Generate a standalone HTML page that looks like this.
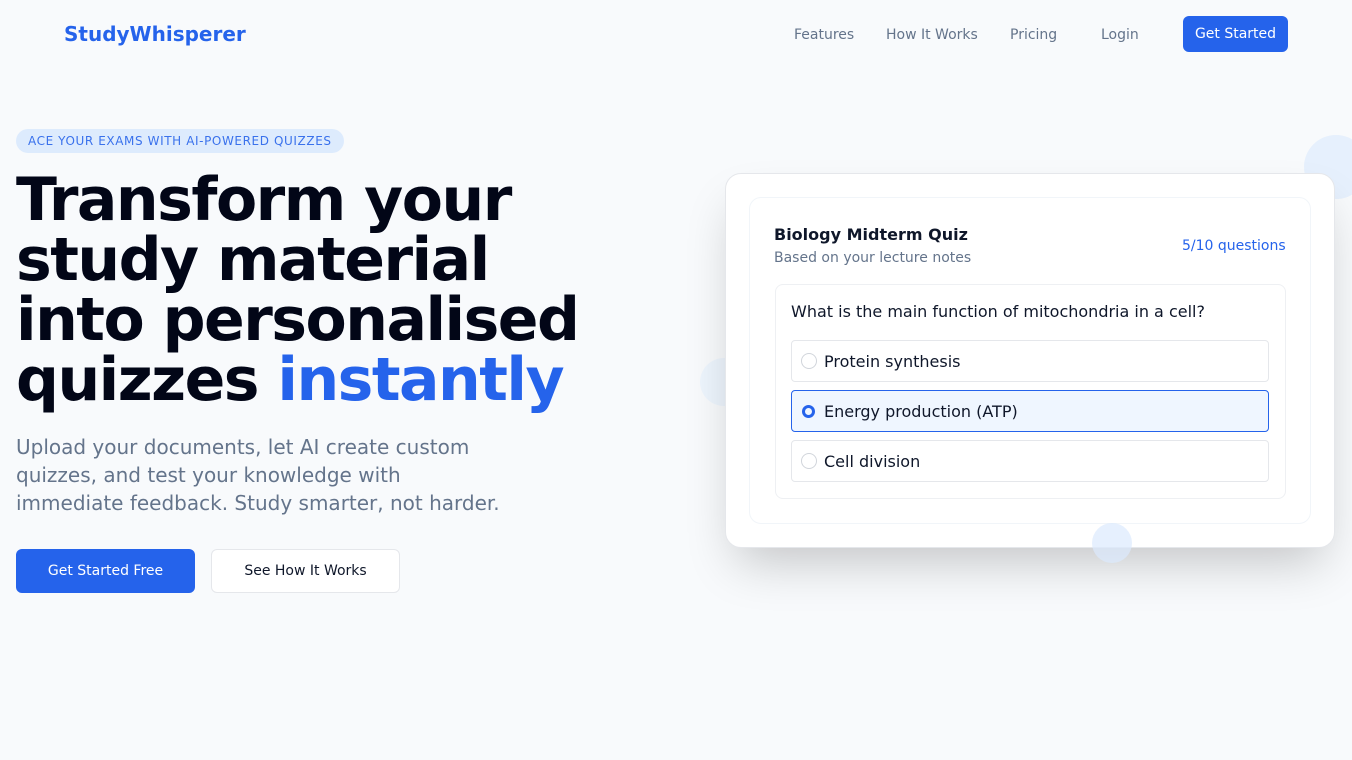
<!DOCTYPE html>
<html><head><meta charset="utf-8"><style>
*{margin:0;padding:0;box-sizing:border-box}
body{width:1352px;height:760px;background:#f8fafc;font-family:"DejaVu Sans","Liberation Sans",sans-serif;position:relative;overflow:hidden;color:#0f172a}
.a{position:absolute}
.logo{left:64px;top:21px;font-size:20px;font-weight:bold;color:#2563eb;line-height:26px}
.nav{top:26px;font-size:14px;color:#64748b;line-height:18px}
.btn{display:flex;align-items:center;justify-content:center;border-radius:6px}
.badge{left:16px;top:129px;height:24px;padding:0 12px;border-radius:12px;background:#dbeafe;color:#2563eb;font-size:12px;letter-spacing:.6px;line-height:24px;opacity:.9}
h1{position:absolute;left:16px;top:170px;font-size:60px;line-height:60px;letter-spacing:-1.5px;font-weight:bold;color:#020617;white-space:nowrap}
.p{left:16px;top:433px;width:490px;font-size:20px;line-height:28px;color:#64748b}
.card{left:725px;top:173px;width:610px;height:375px;background:#fff;border-radius:16px;border:1px solid #e5e7eb;box-shadow:0 25px 50px -12px rgba(0,0,0,.22)}
.inner{left:749px;top:197px;width:562px;height:327px;background:#fff;border:1px solid #f1f5f9;border-radius:12px}
.q{left:775px;top:284px;width:511px;height:215px;border:1px solid #eef0f3;border-radius:8px;background:#fff}
.opt{left:791px;width:478px;height:42px;border:1px solid #e5e7eb;border-radius:4px;font-size:16px;display:flex;align-items:center;padding-left:32px;background:#fff}
.opt i{position:absolute;left:9px;top:12px;width:16px;height:16px;border-radius:50%;border:1px solid #d1d5db}
.circle{border-radius:50%;background:#dbeafe;opacity:.6}
</style></head><body>
<div class="a circle" style="left:1304px;top:135px;width:64px;height:64px"></div>
<div class="a circle" style="left:700px;top:358px;width:48px;height:48px;opacity:.35"></div>
<div class="a logo">StudyWhisperer</div>
<div class="a nav" style="left:794px">Features</div>
<div class="a nav" style="left:886px">How It Works</div>
<div class="a nav" style="left:1010px">Pricing</div>
<div class="a nav" style="left:1101px">Login</div>
<div class="a btn" style="left:1183px;top:16px;width:105px;height:36px;background:#2563eb;color:#fff;font-size:14px">Get Started</div>
<div class="a badge">ACE YOUR EXAMS WITH AI-POWERED QUIZZES</div>
<h1>Transform your<br>study material<br>into personalised<br>quizzes <span style="color:#2563eb">instantly</span></h1>
<div class="a p">Upload your documents, let AI create custom quizzes, and test your knowledge with immediate feedback. Study smarter, not harder.</div>
<div class="a btn" style="left:16px;top:549px;width:179px;height:44px;background:#2563eb;color:#fff;font-size:14px">Get Started Free</div>
<div class="a btn" style="left:211px;top:549px;width:189px;height:44px;background:#fff;border:1px solid #e5e7eb;color:#0f172a;font-size:14px">See How It Works</div>
<div class="a card"></div>
<div class="a inner"></div>
<div class="a" style="left:774px;top:225px;font-size:16px;font-weight:bold;line-height:20px">Biology Midterm Quiz</div>
<div class="a" style="left:774px;top:250px;font-size:14px;color:#64748b;line-height:17px">Based on your lecture notes</div>
<div class="a" style="left:1182px;top:238px;font-size:14px;color:#2563eb;line-height:17px">5/10 questions</div>
<div class="a q"></div>
<div class="a" style="left:791px;top:302px;font-size:16px;line-height:19px">What is the main function of mitochondria in a cell?</div>
<div class="a opt" style="top:340px"><i></i>Protein synthesis</div>
<div class="a opt" style="top:390px;border-color:#2563eb;background:#eff6ff"><i style="border:3px solid #2563eb;width:13px;height:13px;left:10px;top:14px"></i>Energy production (ATP)</div>
<div class="a opt" style="top:440px"><i></i>Cell division</div>
<div class="a circle" style="left:1092px;top:523px;width:40px;height:40px;opacity:.7"></div>
</body></html>
